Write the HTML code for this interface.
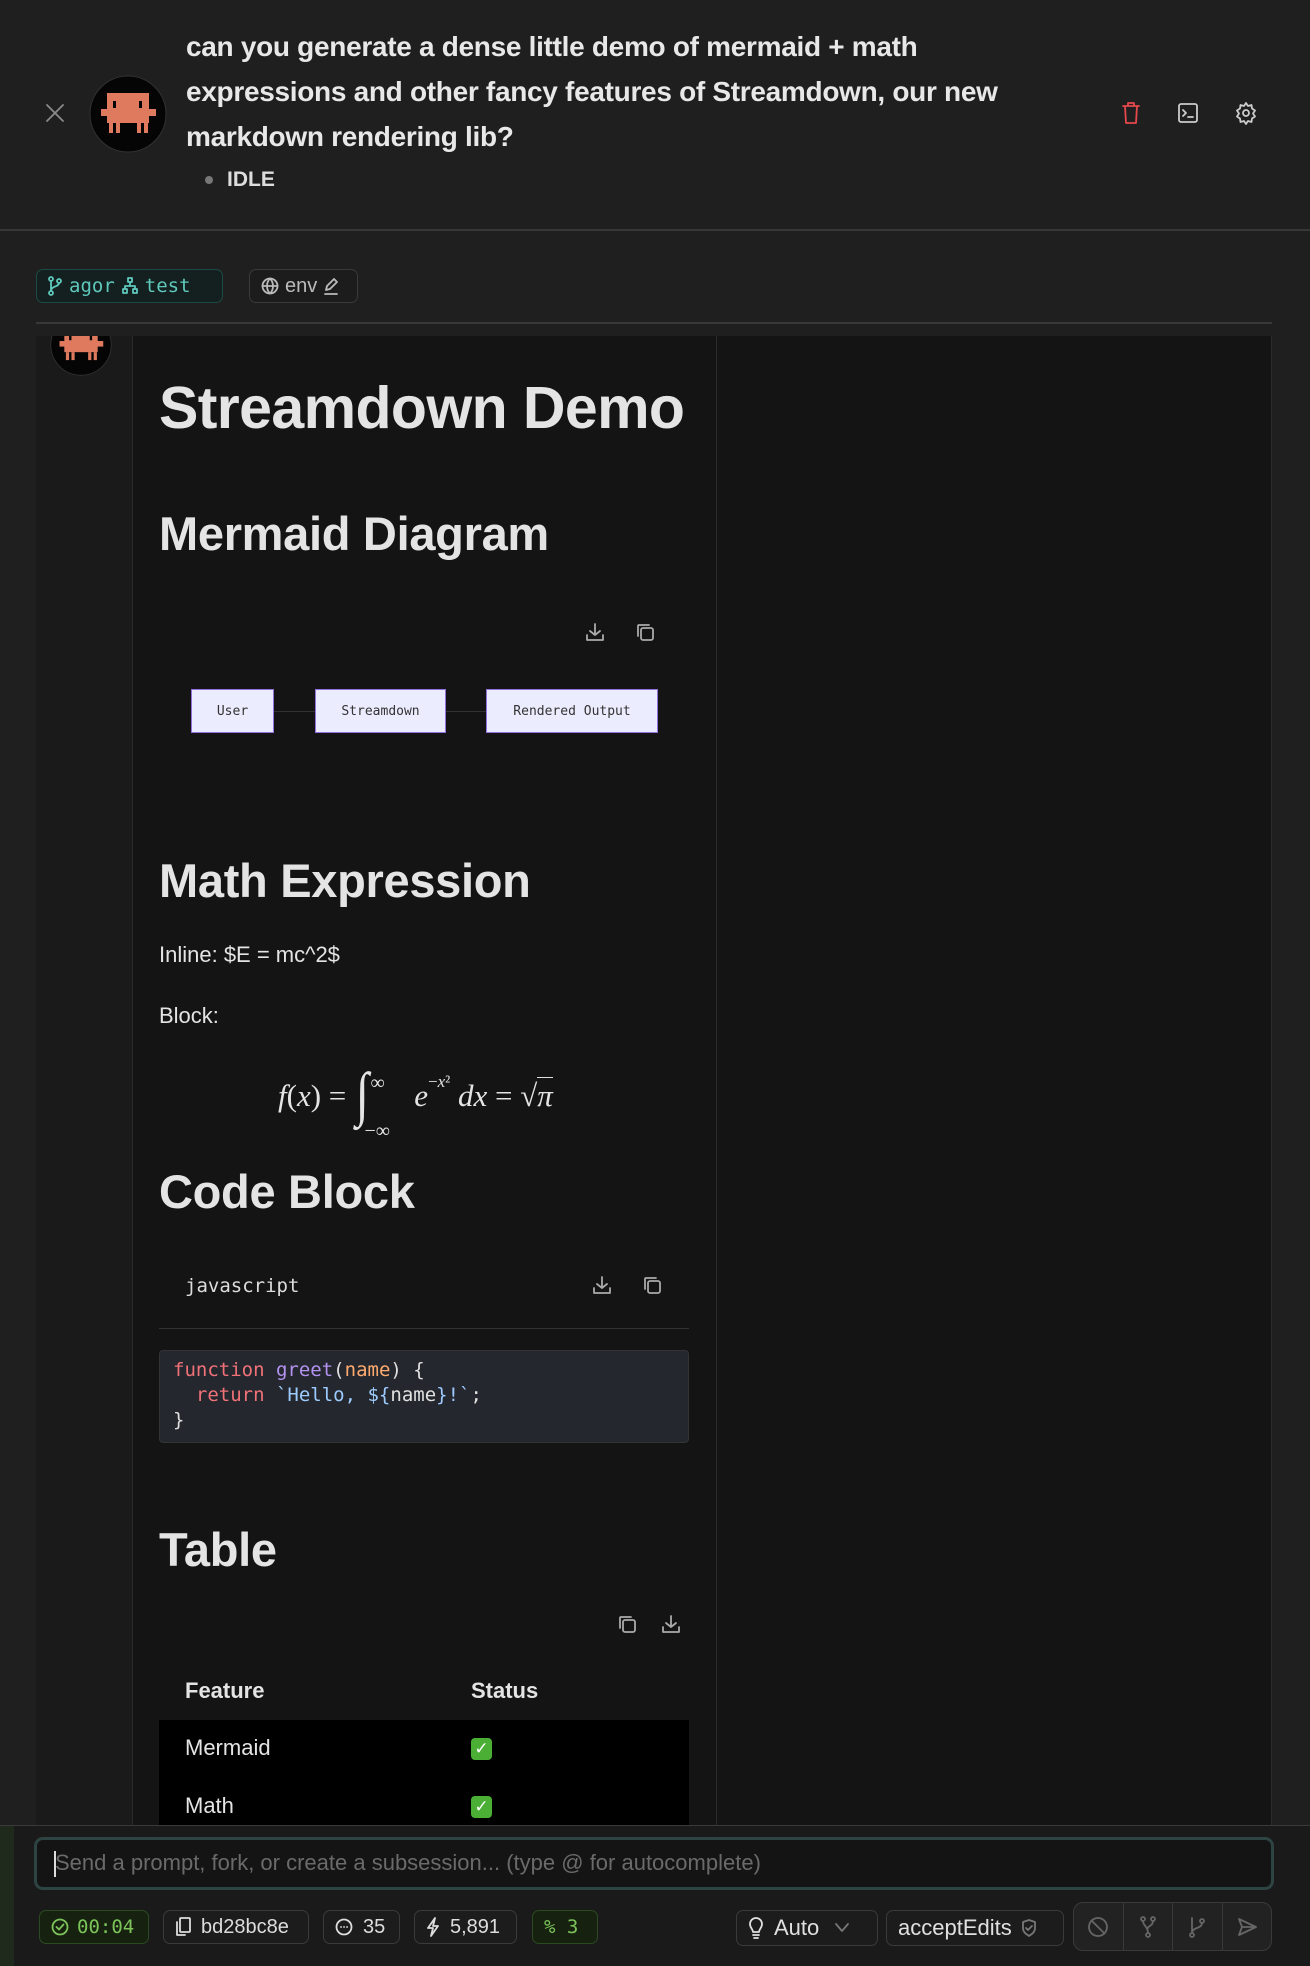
<!DOCTYPE html>
<html><head><meta charset="utf-8">
<style>
*{box-sizing:border-box;margin:0;padding:0}
body{width:1310px;height:1966px;background:#1f1f1f;font-family:"Liberation Sans",sans-serif;color:#e6e6e6;position:relative;overflow:hidden}
.a{position:absolute}
.mono{font-family:"DejaVu Sans Mono","Liberation Mono",monospace}
.chip{position:absolute;border:1px solid #3a3a3a;border-radius:7px;background:#1c1c1c;display:flex;align-items:center;gap:8px;padding:0 11px;font-size:20px;color:#ddd}
svg.i{fill:none;stroke:currentColor;stroke-width:1.8;stroke-linecap:round;stroke-linejoin:round}
h1,h2{position:absolute;left:159px;font-weight:bold;color:#e4e4e4;white-space:nowrap}
</style></head><body>

<!-- header -->
<svg class="a i" style="left:44px;top:102px;color:#8a8a8a" width="22" height="22" viewBox="0 0 22 22"><path d="M3 3L19 19M19 3L3 19"/></svg>
<svg class="a" style="left:89px;top:75px" width="78" height="78" viewBox="0 0 78 78">
<circle cx="39" cy="39" r="38" fill="#050505" stroke="#333" stroke-width="1"/>
<g fill="#e07a5f"><rect x="18" y="18" width="42" height="30"/><rect x="12" y="34" width="55" height="7"/>
<rect x="20" y="48" width="4" height="10"/><rect x="27" y="48" width="4" height="10"/><rect x="48" y="48" width="4" height="10"/><rect x="55" y="48" width="4" height="10"/></g>
<g fill="#050505"><rect x="24" y="26" width="3" height="7"/><rect x="50" y="26" width="3" height="7"/></g></svg>
<div class="a" style="left:186px;top:24px;width:850px;font-size:28px;line-height:45px;font-weight:bold;color:#e8e8e8;letter-spacing:-0.3px">can you generate a dense little demo of mermaid + math<br>expressions and other fancy features of Streamdown, our new<br>markdown rendering lib?</div>
<div class="a" style="left:205px;top:176px;width:8px;height:8px;border-radius:50%;background:#777"></div>
<div class="a" style="left:227px;top:168px;font-size:21px;font-weight:bold;color:#ddd">IDLE</div>
<svg class="a i" style="left:1120px;top:101px;color:#e5484d" width="22" height="24" viewBox="0 0 22 24"><path d="M3 5h16M8 5V2h6v3M5 5l1 17h10l1-17"/></svg>
<svg class="a i" style="left:1177px;top:102px;color:#ccc" width="22" height="22" viewBox="0 0 22 22"><rect x="2" y="2" width="18" height="18" rx="2"/><path d="M6 8l3 3-3 3M11 15h5"/></svg>
<svg class="a i" style="left:1234px;top:101px;color:#ccc" width="24" height="24" viewBox="0 0 24 24"><circle cx="12" cy="12" r="3"/><path d="M12 2l2 3 3.5-1 .5 3.5 3 2-2 3 2 3-3 2-.5 3.5-3.5-1-2 3-2-3-3.5 1-.5-3.5-3-2 2-3-2-3 3-2 .5-3.5 3.5 1z"/></svg>
<div class="a" style="left:0;top:229px;width:1310px;height:2px;background:#383838"></div>

<!-- chips -->
<div class="chip mono" style="left:36px;top:269px;width:187px;height:34px;border-color:#1d4a45;background:#13201f;color:#5fc8bc;font-size:19px;gap:7px">
<svg class="i" width="14" height="20" viewBox="0 0 14 20"><circle cx="3" cy="3" r="2"/><circle cx="3" cy="17" r="2"/><circle cx="11" cy="5" r="2"/><path d="M3 5v10M11 7c0 4-8 3-8 8"/></svg>agor
<svg class="i" width="16" height="18" viewBox="0 0 16 18"><rect x="6" y="1" width="4" height="4"/><rect x="1" y="12" width="4" height="4"/><rect x="11" y="12" width="4" height="4"/><path d="M8 5v4M3 12V9h10v3"/></svg>test</div>
<div class="chip" style="left:249px;top:269px;width:109px;height:34px;color:#bbb;gap:6px">
<svg class="i" width="18" height="18" viewBox="0 0 18 18"><circle cx="9" cy="9" r="7.5"/><path d="M1.5 9h15M9 1.5c-4 4-4 11 0 15M9 1.5c4 4 4 11 0 15"/></svg>env
<svg class="i" width="16" height="18" viewBox="0 0 16 18"><path d="M3 13l1-4 7-7 3 3-7 7zM2 17h12"/></svg></div>
<div class="a" style="left:36px;top:322px;width:1236px;height:2px;background:#383838"></div>

<!-- panel -->
<div class="a" style="left:36px;top:336px;width:1236px;height:1490px;background:#141414;border-left:1px solid #2c2c2c;border-right:1px solid #2c2c2c"></div>
<div class="a" style="left:36px;top:336px;width:97px;height:1490px;background:#1a1a1a;border-right:1px solid #2c2c2c"></div>
<div class="a" style="left:716px;top:336px;width:1px;height:1490px;background:#2c2c2c"></div>
<div class="a" style="left:50px;top:336px;width:62px;height:40px;overflow:hidden">
<svg style="position:absolute;left:0;top:-22px" width="62" height="62" viewBox="0 0 78 78"><circle cx="39" cy="39" r="38" fill="#050505" stroke="#333"/><g fill="#e07a5f"><rect x="18" y="18" width="42" height="30"/><rect x="12" y="34" width="55" height="7"/><rect x="20" y="48" width="4" height="10"/><rect x="27" y="48" width="4" height="10"/><rect x="48" y="48" width="4" height="10"/><rect x="55" y="48" width="4" height="10"/></g><g fill="#050505"><rect x="24" y="26" width="3" height="7"/><rect x="50" y="26" width="3" height="7"/></g></svg></div>

<h1 style="top:374px;font-size:59px;letter-spacing:-0.6px">Streamdown Demo</h1>
<h2 style="top:506px;font-size:47px;letter-spacing:-0.3px">Mermaid Diagram</h2>

<svg class="a i" style="left:585px;top:622px;color:#aaa" width="20" height="20" viewBox="0 0 20 20"><path d="M10 2v11M5 9l5 4 5-4M2 13v5h16v-5"/></svg>
<svg class="a i" style="left:635px;top:622px;color:#aaa" width="20" height="20" viewBox="0 0 20 20"><rect x="6" y="6" width="12" height="12" rx="2"/><path d="M3 14V4a1 1 0 0 1 1-1h10"/></svg>

<div class="a" style="left:273px;top:711px;width:42px;height:1px;background:#333"></div>
<div class="a" style="left:445px;top:711px;width:41px;height:1px;background:#333"></div>
<div class="a mono" style="left:191px;top:689px;width:83px;height:44px;background:#ececff;border:1px solid #9370db;color:#333;font-size:13px;display:flex;align-items:center;justify-content:center">User</div>
<div class="a mono" style="left:315px;top:689px;width:131px;height:44px;background:#ececff;border:1px solid #9370db;color:#333;font-size:13px;display:flex;align-items:center;justify-content:center">Streamdown</div>
<div class="a mono" style="left:486px;top:689px;width:172px;height:44px;background:#ececff;border:1px solid #9370db;color:#333;font-size:13px;display:flex;align-items:center;justify-content:center">Rendered Output</div>

<h2 style="top:853px;font-size:47px;letter-spacing:-0.3px">Math Expression</h2>
<div class="a" style="left:159px;top:942px;font-size:22px;color:#e4e4e4">Inline: $E = mc^2$</div>
<div class="a" style="left:159px;top:1003px;font-size:22px;color:#e4e4e4">Block:</div>
<div class="a" style="left:278px;top:1052px;font-family:'Liberation Serif',serif;font-size:31px;color:#e4e4e4;white-space:nowrap"><i>f</i>(<i>x</i>) = <span style="font-size:60px;position:relative;top:8px;display:inline-block;transform:scaleX(0.8)">∫</span><span style="position:relative;display:inline-block;width:36px"><span style="position:absolute;left:0;top:-34px;font-size:20px">∞</span><span style="position:absolute;left:-6px;top:14px;font-size:20px">−∞</span></span> <i>e</i><sup style="font-size:17px;position:relative;top:-8px">−<i>x</i>²</sup> <i>dx</i> = √<span style="border-top:1px solid #ddd"><i>π</i></span></div>

<h2 style="top:1164px;font-size:47px;letter-spacing:-0.3px">Code Block</h2>
<div class="a mono" style="left:185px;top:1275px;font-size:19px;color:#ddd">javascript</div>
<svg class="a i" style="left:592px;top:1275px;color:#aaa" width="20" height="20" viewBox="0 0 20 20"><path d="M10 2v11M5 9l5 4 5-4M2 13v5h16v-5"/></svg>
<svg class="a i" style="left:642px;top:1275px;color:#aaa" width="20" height="20" viewBox="0 0 20 20"><rect x="6" y="6" width="12" height="12" rx="2"/><path d="M3 14V4a1 1 0 0 1 1-1h10"/></svg>
<div class="a" style="left:159px;top:1328px;width:530px;height:1px;background:#333"></div>
<div class="a mono" style="left:159px;top:1350px;width:530px;height:93px;background:#24272d;border:1px solid #333;border-radius:4px;padding:7px 13px;font-size:19px;line-height:25px;white-space:pre;color:#e0e0e0"><span style="color:#f07178">function</span> <span style="color:#b392f0">greet</span>(<span style="color:#ffab70">name</span>) {
  <span style="color:#f07178">return</span> <span style="color:#9ecbff">`Hello, ${</span>name<span style="color:#9ecbff">}!`</span>;
}</div>

<h2 style="top:1522px;font-size:47px;letter-spacing:-0.3px">Table</h2>
<svg class="a i" style="left:617px;top:1614px;color:#aaa" width="20" height="20" viewBox="0 0 20 20"><rect x="6" y="6" width="12" height="12" rx="2"/><path d="M3 14V4a1 1 0 0 1 1-1h10"/></svg>
<svg class="a i" style="left:661px;top:1614px;color:#aaa" width="20" height="20" viewBox="0 0 20 20"><path d="M10 2v11M5 9l5 4 5-4M2 13v5h16v-5"/></svg>
<div class="a" style="left:185px;top:1678px;font-size:22px;font-weight:bold;color:#e4e4e4">Feature</div>
<div class="a" style="left:471px;top:1678px;font-size:22px;font-weight:bold;color:#e4e4e4">Status</div>
<div class="a" style="left:159px;top:1720px;width:530px;height:106px;background:#000"></div>
<div class="a" style="left:185px;top:1735px;font-size:22px;color:#e4e4e4">Mermaid</div>
<div class="a" style="left:471px;top:1738px;width:21px;height:22px;border-radius:4px;background:#4caf35;color:#fff;font-size:17px;text-align:center;line-height:22px;font-family:'DejaVu Sans',sans-serif">✓</div>
<div class="a" style="left:185px;top:1793px;font-size:22px;color:#e4e4e4">Math</div>
<div class="a" style="left:471px;top:1796px;width:21px;height:22px;border-radius:4px;background:#4caf35;color:#fff;font-size:17px;text-align:center;line-height:22px;font-family:'DejaVu Sans',sans-serif">✓</div>

<!-- footer -->
<div class="a" style="left:0;top:1825px;width:1310px;height:141px;background:#1a1a1a;border-top:1px solid #3a3a3a"></div>
<div class="a" style="left:0;top:1826px;width:14px;height:140px;background:#1f2a1c"></div>
<div class="a" style="left:34px;top:1837px;width:1240px;height:53px;border:3px solid #2d4442;border-radius:9px;background:#141414"></div>
<div class="a" style="left:54px;top:1851px;width:2px;height:26px;background:#ddd"></div>
<div class="a" style="left:55px;top:1850px;font-size:22px;color:#6a6a6a">Send a prompt, fork, or create a subsession... (type @ for autocomplete)</div>

<div class="chip mono" style="left:39px;top:1910px;width:110px;height:34px;border-color:#2b4a22;background:#16220f;color:#7cc45a;font-size:19px;gap:8px"><svg class="i" width="18" height="18" viewBox="0 0 18 18"><circle cx="9" cy="9" r="7.5"/><path d="M5.5 9l2.5 2.5 4.5-5"/></svg>00:04</div>
<div class="chip" style="left:163px;top:1910px;width:146px;height:34px;gap:10px"><svg class="i" width="16" height="20" viewBox="0 0 16 20"><rect x="5" y="1" width="10" height="14" rx="1"/><path d="M2 5v13h8"/></svg>bd28bc8e</div>
<div class="chip" style="left:323px;top:1910px;width:77px;height:34px;gap:10px"><svg class="i" width="18" height="18" viewBox="0 0 18 18"><circle cx="9" cy="9" r="7.5"/><path d="M6 9h.1M9 9h.1M12 9h.1"/></svg>35</div>
<div class="chip" style="left:414px;top:1910px;width:103px;height:34px;gap:10px"><svg class="i" width="14" height="20" viewBox="0 0 14 20"><path d="M9 1L2 11h5l-2 8 7-10H7z"/></svg>5,891</div>
<div class="chip mono" style="left:532px;top:1910px;width:66px;height:34px;border-color:#2b4a22;background:#16220f;color:#7cc45a;font-size:19px">% 3</div>

<div class="chip" style="left:736px;top:1910px;width:142px;height:36px;font-size:22px;gap:10px;color:#e0e0e0"><svg class="i" width="16" height="22" viewBox="0 0 16 22"><path d="M5 15c0-3-3-4-3-8a6 6 0 0 1 12 0c0 4-3 5-3 8zM5 18h6M6 21h4"/></svg>Auto<svg class="i" style="color:#777;margin-left:6px" width="14" height="10" viewBox="0 0 14 10"><path d="M1 1l6 7 6-7"/></svg></div>
<div class="chip" style="left:886px;top:1910px;width:178px;height:36px;font-size:22px;gap:10px;color:#e0e0e0">acceptEdits<svg class="i" style="color:#777" width="14" height="18" viewBox="0 0 14 18"><path d="M7 1l6 2v6c0 4-3 6-6 8-3-2-6-4-6-8V3z"/><path d="M4 9l2 2 4-4"/></svg></div>
<div class="a" style="left:1073px;top:1902px;width:199px;height:49px;border:1px solid #3a3a3a;border-radius:10px;background:#222;display:flex;color:#666">
<div style="flex:1;display:flex;align-items:center;justify-content:center;border-right:1px solid #3a3a3a"><svg class="i" width="22" height="22" viewBox="0 0 22 22"><circle cx="11" cy="11" r="9"/><path d="M4.5 4.5l13 13"/></svg></div>
<div style="flex:1;display:flex;align-items:center;justify-content:center;border-right:1px solid #3a3a3a"><svg class="i" width="16" height="22" viewBox="0 0 16 22"><circle cx="3" cy="3" r="2"/><circle cx="13" cy="3" r="2"/><circle cx="8" cy="19" r="2"/><path d="M3 5c0 5 5 5 5 12M13 5c0 5-5 5-5 7"/></svg></div>
<div style="flex:1;display:flex;align-items:center;justify-content:center;border-right:1px solid #3a3a3a"><svg class="i" width="16" height="22" viewBox="0 0 16 22"><circle cx="3" cy="19" r="2"/><circle cx="13" cy="5" r="2"/><path d="M3 2v15M13 7c0 6-10 4-10 10"/></svg></div>
<div style="flex:1;display:flex;align-items:center;justify-content:center"><svg class="i" width="22" height="22" viewBox="0 0 22 22"><path d="M3 3l17 8-17 8 3-8zM6 11h14"/></svg></div>
</div>
</body></html>
